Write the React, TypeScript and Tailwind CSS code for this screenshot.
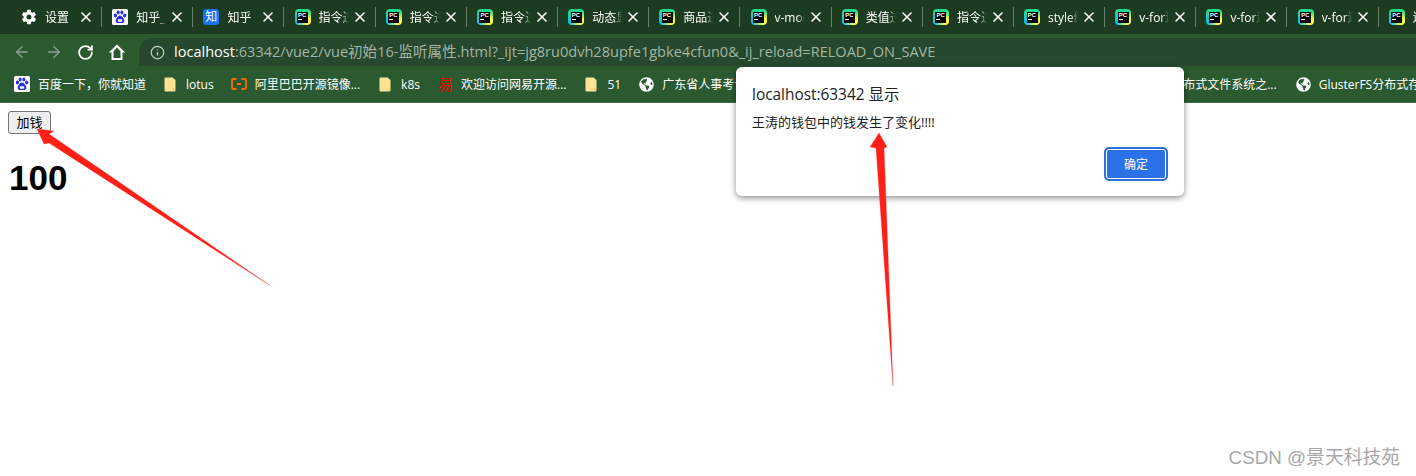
import React from "react";
import { ArrowLeft, ArrowRight, RotateCw, Info, X } from "lucide-react";
import { IoSettingsSharp } from "react-icons/io5";
import { FaGlobeAmericas } from "react-icons/fa";

const sans = "font-['Open_Sans','Noto_Sans_CJK_SC',sans-serif]";

function Paw({ size = 16 }: { size?: number }) {
  return (
    <svg width={size} height={size} viewBox="0 0 16 16" className="shrink-0">
      <rect width="16" height="16" rx="1.5" fill="#ffffff" />
      <g fill="#2932e1">
        <ellipse cx="3.4" cy="6.6" rx="1.6" ry="2" />
        <ellipse cx="6.2" cy="3.4" rx="1.5" ry="2" />
        <ellipse cx="9.9" cy="3.4" rx="1.5" ry="2" />
        <ellipse cx="12.7" cy="6.6" rx="1.6" ry="2" />
        <path d="M8 6.6c-1.8 0-2.4 1.6-3.6 2.8-1.2 1.1-1.2 4.6 1.8 4.6.8 0 1.2-.3 1.8-.3s1 .3 1.8.3c3 0 3-3.5 1.8-4.6C10.4 8.2 9.8 6.6 8 6.6z" />
      </g>
      <rect x="5.8" y="10.2" width="4.4" height="2.6" rx="0.8" fill="#ffffff" />
    </svg>
  );
}

function Zhi() {
  return (
    <span className="flex h-4 w-4 shrink-0 items-center justify-center rounded-[3px] bg-[#1772f6] text-[12px] leading-none text-white">
      知
    </span>
  );
}

function PyCharm() {
  return (
    <span className="relative flex h-4 w-4 shrink-0 items-center justify-center rounded-[4px] bg-[conic-gradient(from_315deg,#21d789_0deg,#21d789_90deg,#fcf84a_150deg,#fcf84a_200deg,#07c3f2_270deg,#21d789_360deg)]">
      <span className="flex h-[11px] w-[11px] flex-col bg-black pl-[1px] font-['Liberation_Sans',sans-serif] text-[6px] font-bold leading-[6px] text-white">
        PC
        <span className="mt-[1px] h-[1px] w-1 bg-white" />
      </span>
    </span>
  );
}

function TabIcon({ kind }: { kind: string }) {
  if (kind === "gear") return <IoSettingsSharp className="h-4 w-4 shrink-0 text-white" />;
  if (kind === "paw") return <Paw />;
  if (kind === "zhi") return <Zhi />;
  return <PyCharm />;
}

function Folder() {
  return (
    <svg width="12" height="15" viewBox="0 0 12 15" className="shrink-0">
      <path d="M0.5 1.500a1 1 0 0 1 1-1h7L11.500 3v10.500a1 1 0 0 1-1 1h-9a1 1 0 0 1-1-1z" fill="#fde293" />
      <path d="M9 11.500h2.500L9 14.500z" fill="#f3c565" />
    </svg>
  );
}

function Ali() {
  return (
    <svg width="16" height="12" viewBox="0 0 16 12" className="shrink-0">
      <path d="M5.500 1H2.500C1.500 1 1 1.700 1 2.500v7C1 10.300 1.500 11 2.500 11h3M10.500 1h3c1 0 1.500.7 1.500 1.500v7c0 .8-.5 1.500-1.500 1.500h-3M6 6h4" fill="none" stroke="#ff6a00" strokeWidth="1.800" />
    </svg>
  );
}

const tabs: [string, string][] = [
  ["gear", "设置"],
  ["paw", "知乎_"],
  ["zhi", "知乎"],
  ["pc", "指令过滤器"],
  ["pc", "指令过滤器"],
  ["pc", "指令过滤器"],
  ["pc", "动态显示"],
  ["pc", "商品过滤"],
  ["pc", "v-model"],
  ["pc", "类值过滤"],
  ["pc", "指令过滤器"],
  ["pc", "style绑定"],
  ["pc", "v-for遍历"],
  ["pc", "v-for遍历"],
  ["pc", "v-for遍历"],
  ["pc", "遍历数组"],
];

function Tab({ icon, label }: { icon: string; label: string }) {
  return (
    <div className="flex h-[34px] w-[91.2px] shrink-0 items-center pl-[10px]">
      <TabIcon kind={icon} />
      <span className="ml-[8px] mt-[1px] w-[30px] shrink-0 overflow-hidden whitespace-nowrap text-[12px] text-white [mask-image:linear-gradient(to_right,#000_75%,transparent_100%)]">
        {label}
      </span>
      <X className="ml-[3px] h-4 w-4 shrink-0 text-white" strokeWidth={2.4} />
      <span className="ml-[7px] h-[20px] w-[1px] shrink-0 bg-[#6b7f6d]" />
    </div>
  );
}

function Bookmark({ icon, label, className }: { icon: React.ReactNode; label: string; className: string }) {
  return (
    <div className={"flex shrink-0 items-center " + className}>
      {icon}
      <span className="mt-[1px] whitespace-nowrap text-[12px] text-white">{label}</span>
    </div>
  );
}

const globe = <FaGlobeAmericas className="h-[15px] w-[15px] shrink-0 text-white" />;

export default function App() {
  return (
    <div className={"relative h-[476px] w-[1416px] overflow-hidden bg-white " + sans}>
      {/* tab strip */}
      <div className="flex h-[34px] overflow-hidden bg-[#1c3b20] pl-[11px]">
        {tabs.map((t, i) => (
          <Tab key={i} icon={t[0]} label={t[1]} />
        ))}
      </div>

      {/* toolbar */}
      <div className="flex h-[32px] items-end bg-[#2b5a31]">
        <div className="flex h-[28px] items-center">
          <ArrowLeft className="ml-[13px] h-[18px] w-[18px] text-[#8aa08d]" strokeWidth={2} />
          <ArrowRight className="ml-[14px] h-[18px] w-[18px] text-[#8aa08d]" strokeWidth={2} />
          <RotateCw className="ml-[14px] h-[17px] w-[17px] text-white" strokeWidth={2.5} />
          <svg width="18" height="18" viewBox="0 0 18 18" className="ml-[14px]">
            <path d="M9 1.500.8 9.500H3.500V17h11V9.500h2.700zM5.500 15V8.200L9 4.500l3.500 3.700V15z" fill="#ffffff" />
          </svg>
        </div>
        <div className="ml-[13px] flex h-[28px] flex-1 items-center rounded-tl-[14px] bg-[#26482c] pl-[11px]">
          <Info className="h-[15px] w-[15px] text-[#c5d0c6]" strokeWidth={2} />
          <span className="ml-[9px] whitespace-nowrap text-[14.55px]">
            <span className="text-white">localhost</span>
            <span className="text-[#a3b5a6]">:63342/vue2/vue初始16-监听属性.html?_ijt=jg8ru0dvh28upfe1gbke4cfun0&_ij_reload=RELOAD_ON_SAVE</span>
          </span>
        </div>
      </div>

      {/* bookmarks */}
      <div className="flex h-[37px] items-center overflow-hidden border-b border-[#3f6b45] bg-[#2b5a31]">
        <Bookmark className="ml-[14px] gap-[8px]" icon={<Paw />} label="百度一下，你就知道" />
        <Bookmark className="ml-[18px] gap-[10px]" icon={<Folder />} label="lotus" />
        <Bookmark className="ml-[17px] gap-[8px]" icon={<Ali />} label="阿里巴巴开源镜像..." />
        <Bookmark className="ml-[19px] gap-[10px]" icon={<Folder />} label="k8s" />
        <Bookmark className="ml-[18px] gap-[9px]" icon={<span className="w-[14px] text-[15px] leading-none text-[#f00000]">易</span>} label="欢迎访问网易开源..." />
        <Bookmark className="ml-[19px] gap-[10px]" icon={<Folder />} label="51" />
        <Bookmark className="ml-[18px] gap-[8px]" icon={globe} label="广东省人事考试网" />
        <div className="ml-[425px] mt-[1px] flex shrink-0 items-center">
          <span className="whitespace-nowrap text-[12px] text-white">布式文件系统之...</span>
        </div>
        <Bookmark className="ml-[19px] gap-[8px]" icon={globe} label="GlusterFS分布式存储" />
      </div>

      {/* page */}
      <div className="px-[8px] pt-[8px] font-['Liberation_Sans','Noto_Sans_CJK_SC',sans-serif] text-black">
        <button className="block h-[23px] w-[43px] rounded-[3px] border border-[#767676] bg-[#efefef] text-[13px] leading-none">
          加钱
        </button>
        <h1 className="mt-[24px] pl-[1px] text-[35px] font-bold leading-[40px]">100</h1>
      </div>

      {/* alert */}
      <div className="absolute left-[736px] top-[67px] flex h-[129px] w-[448px] flex-col rounded-[6px] bg-white px-[16px] shadow-[0_2px_6px_rgba(0,0,0,0.45)]">
        <div className="mt-[18px] text-[15.4px] leading-[20px] text-[#202124]">localhost:63342 显示</div>
        <div className="mt-[8px] text-[13px] leading-[18px] text-[#202124]">王涛的钱包中的钱发生了变化!!!!</div>
        <div className="mt-auto mb-[15px] flex justify-end">
          <button className="flex h-[34px] w-[64px] items-center justify-center rounded-[5px] border-2 border-[#2b72e6] bg-[#2b72e6] pt-[1px] text-[12px] text-white outline outline-1 -outline-offset-3 outline-white">
            确定
          </button>
        </div>
      </div>

      {/* annotation arrows */}
      <svg className="pointer-events-none absolute left-0 top-0" width="1416" height="476" viewBox="0 0 1416 476">
        <polygon points="37,129 54,131 49,134 270,285.500 49,143 44,144" fill="#ff2018" stroke="#ff2018" strokeWidth="0.3" />
        <polygon points="879,133 887,147 884,148 893,386 876,148 870,147" fill="#ff2018" stroke="#ff2018" strokeWidth="0.3" />
      </svg>

      {/* watermark */}
      <div className="absolute bottom-[6px] right-[16px] whitespace-nowrap font-['Liberation_Sans','Noto_Sans_CJK_SC',sans-serif] text-[18.8px] leading-[24px] text-[#a8a8a8]">
        CSDN @景天科技苑
      </div>
    </div>
  );
}
